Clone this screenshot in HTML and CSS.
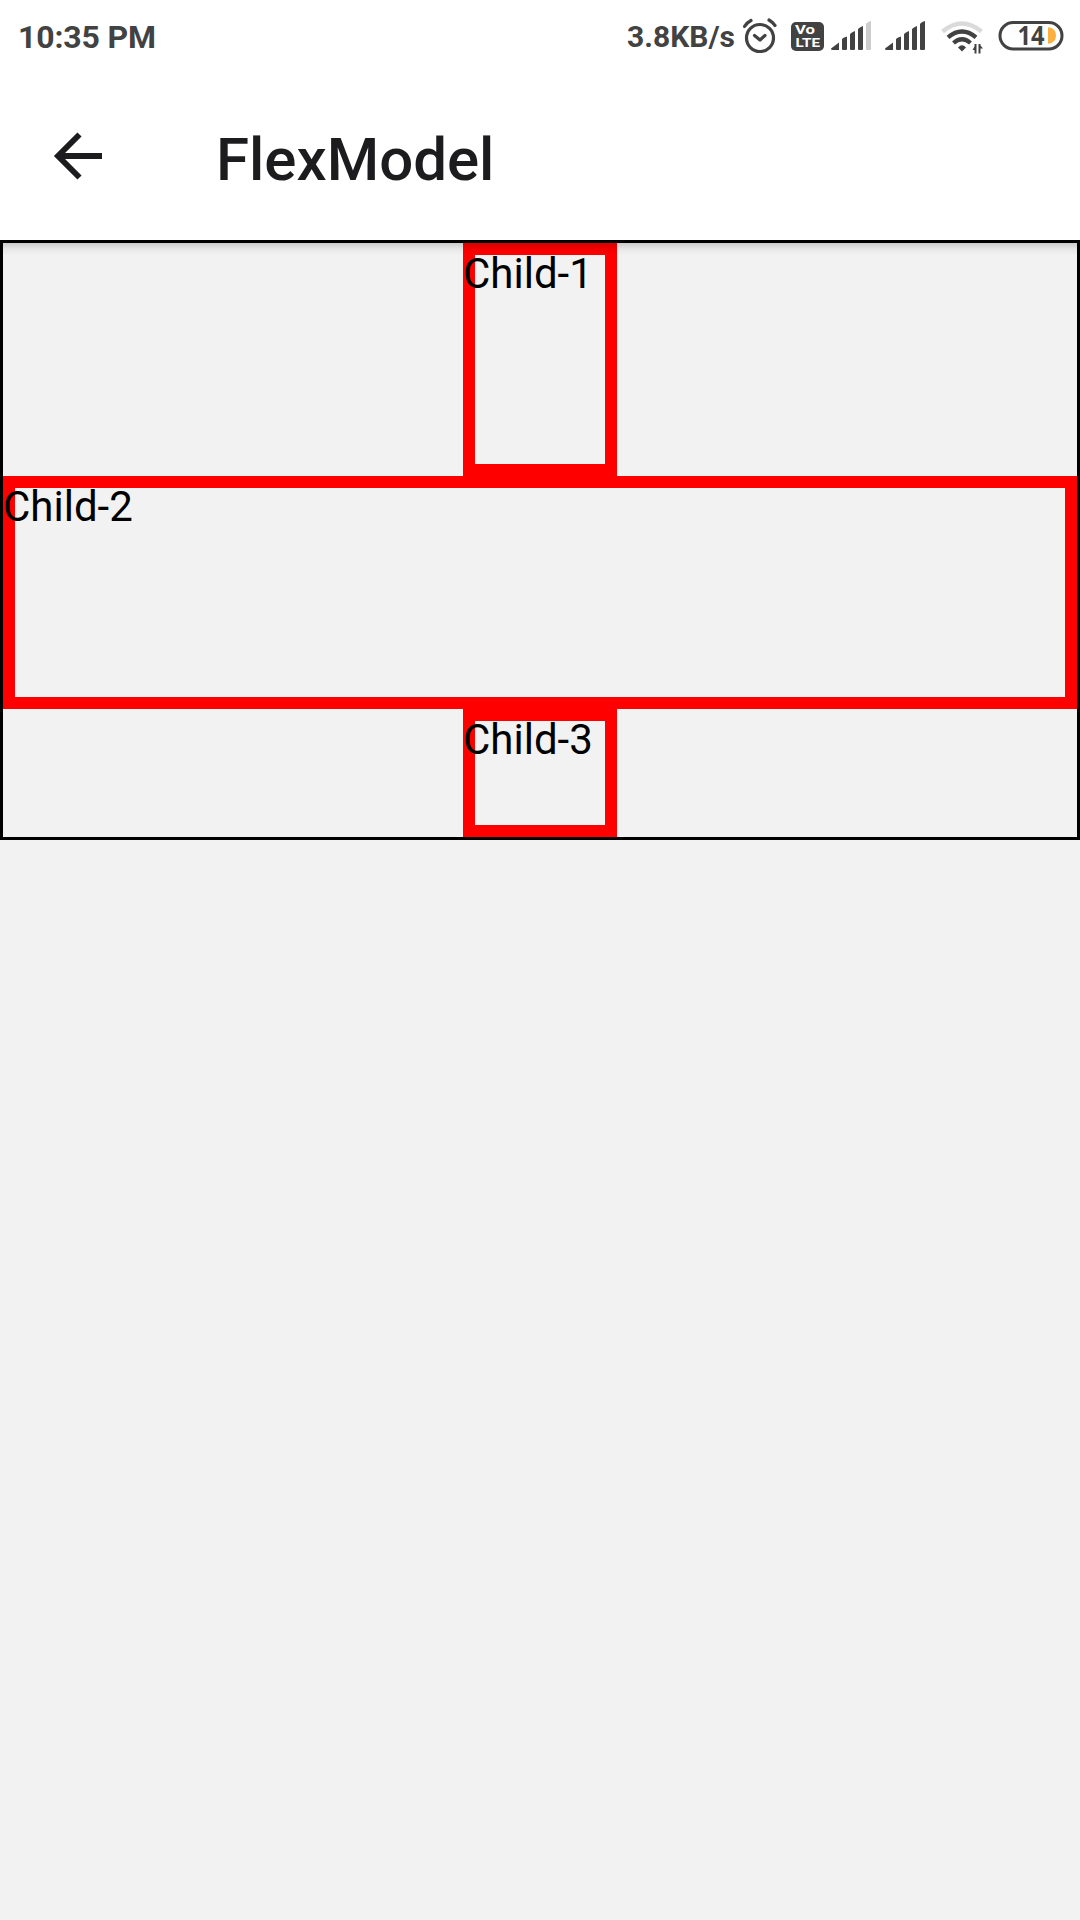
FILE: index.html
```html
<!DOCTYPE html>
<html lang="en">
<head>
<meta charset="utf-8">
<title>FlexModel</title>
<link rel="stylesheet" href="styles.css">
</head>
<body>
<header class="header">
  <div class="status">
    <span class="clock">10:35 PM</span>
    <span class="speed">3.8KB/s</span>
    <svg class="alarm" width="36" height="40" viewBox="742 17 36 40">
      <g fill="none" stroke="#424242" stroke-width="3.2" stroke-linecap="round">
        <circle cx="760" cy="38" r="13.5"/>
        <path d="M754.5 35.5l5.5 4.5 5-4.5" stroke-linejoin="round"/>
        <path d="M744.5 26.5q2.500-4 6.500-6M775 25.500q-2.500-3.500-6-5.500"/>
      </g>
    </svg>
    <svg class="volte" width="33" height="40" viewBox="791 17 33 40">
      <rect x="791" y="22" width="33" height="29" rx="5" fill="#424242"/>
      <g class="volte-text"><text x="795" y="34.300" textLength="20" lengthAdjust="spacingAndGlyphs">Vo</text><text x="795.500" y="47.300" textLength="24.500" lengthAdjust="spacingAndGlyphs">LTE</text></g>
    </svg>
    <svg class="signal" width="40" height="40" viewBox="831 17 40 40">
      <path fill="#424242" d="M831 48.500L839 42.500V50H832.500Q831 50 831 48.500zM842 39.500Q842 38 847 36.500V49Q847 50 846 50H843Q842 50 842 49zM850 34.500Q850 33 855 31V49Q855 50 854 50H851Q850 50 850 49zM858 29.500Q858 28 863 26V49Q863 50 862 50H859Q858 50 858 49z"/>
      <path fill="#ccc" d="M866 24.500Q866 22.500 871 21V49Q871 50 870 50H867Q866 50 866 49z"/>
    </svg>
    <svg class="signal-two" width="40" height="40" viewBox="831 17 40 40">
      <path fill="#424242" d="M831 48.500L839 42.500V50H832.500Q831 50 831 48.500zM842 39.500Q842 38 847 36.500V49Q847 50 846 50H843Q842 50 842 49zM850 34.500Q850 33 855 31V49Q855 50 854 50H851Q850 50 850 49zM858 29.500Q858 28 863 26V49Q863 50 862 50H859Q858 50 858 49zM866 24.500Q866 22.500 871 21V49Q871 50 870 50H867Q866 50 866 49z"/>
    </svg>
    <svg class="wifi" width="43" height="40" viewBox="941 17 43 40">
      <g fill="none" stroke-width="4.300">
        <path stroke="#dadada" d="M942.500 31.500Q962 15.500 981.500 31.500"/>
        <path stroke="#424242" d="M948 37.300Q962 25.500 976 37.300M953.500 43Q962 35.500 970.500 43"/>
      </g>
      <path fill="#424242" d="M958 47.500Q962 43 966 47.500L962 51.500zM976.500 44V53.500H974.500V50H972.500L974.500 46.500V44zM978.500 53.500V44H980.500V45.500L983 48.500H980.500V53.500z"/>
    </svg>
    <svg class="battery" width="66" height="40" viewBox="998 17 66 40">
      <rect x="1000" y="22.500" width="62" height="26.500" rx="13.250" fill="#fff" stroke="#424242" stroke-width="3"/>
      <path fill="#fbb03f" d="M1048 27.300Q1056 28 1056 35.500T1048 43.700z"/>
      <text class="battery-text" x="1017.500" y="45" textLength="27" lengthAdjust="spacingAndGlyphs">14</text>
    </svg>
  </div>
  <div class="appbar">
    <svg class="back" width="52" height="52" viewBox="52 130 52 52">
      <path d="M102 156H59M79.500 134.500L58 156l21.500 21.500" fill="none" stroke="#1c1c1e" stroke-width="5.800"/>
    </svg>
    <h1 class="title">FlexModel</h1>
  </div>
</header>
<main class="parent">
  <div class="child tall">Child-1</div>
  <div class="child tall wide">Child-2</div>
  <div class="child fill">Child-3</div>
</main>
</body>
</html>
```
FILE: styles.css
```css
body {
  margin: 0;
  min-height: 1920px;
  background: #f2f2f2;
  font-family: Roboto, sans-serif;
}

svg {
  display: block;
  flex: none;
}

.header {
  position: relative;
  height: 240px;
  background: #fff;
}

/* soft shadow cast on the content below the bar */
.header::after {
  content: "";
  position: absolute;
  top: 243px;
  left: 3px;
  right: 3px;
  height: 12px;
  background: linear-gradient(rgba(0, 0, 0, 0.16), rgba(0, 0, 0, 0.05) 50%, rgba(0, 0, 0, 0));
}

.status {
  display: flex;
  height: 57px;
  padding: 17px 16px 0 18px;
  box-sizing: border-box;
  color: #424242;
  font-size: 32px;
  line-height: 40px;
  font-weight: 700;
  white-space: nowrap;
}

.clock {
  flex: 1;
  letter-spacing: -0.15px;
}

.speed {
  font-size: 30px;
}

.alarm {
  margin-left: 7px;
}

.volte {
  margin-left: 13px;
}

.volte-text {
  fill: #fff;
  font-size: 13px;
  font-weight: 700;
}

.signal {
  margin-left: 7px;
}

.signal-two,
.battery {
  margin-left: 14px;
}

.wifi {
  margin-left: 16px;
}

.battery-text {
  fill: #424242;
  font-family: "Open Sans", sans-serif;
  font-size: 27px;
}

.appbar {
  display: flex;
  align-items: center;
  padding: 63px 52px 0;
}

.title {
  margin: 5px 0 0 112px;
  color: #1c1c1e;
  font-size: 60px;
  line-height: 70px;
  font-weight: 500;
}

.back {
  margin-top: -3px;
}

.parent {
  display: flex;
  flex-direction: column;
  align-items: center;
  height: 600px;
  box-sizing: border-box;
  border: 3px solid #000;
}

/* the inset ring lets the label sit on top of the red frame */
.child {
  width: 154px;
  padding-top: 6px;
  box-sizing: border-box;
  box-shadow: inset 0 0 0 12px #f00;
  color: #000;
  font-size: 42px;
  line-height: 49px;
}

.tall {
  flex: 0 0 233px;
}

.wide {
  width: 100%;
}

.fill {
  flex: 1;
}
```
